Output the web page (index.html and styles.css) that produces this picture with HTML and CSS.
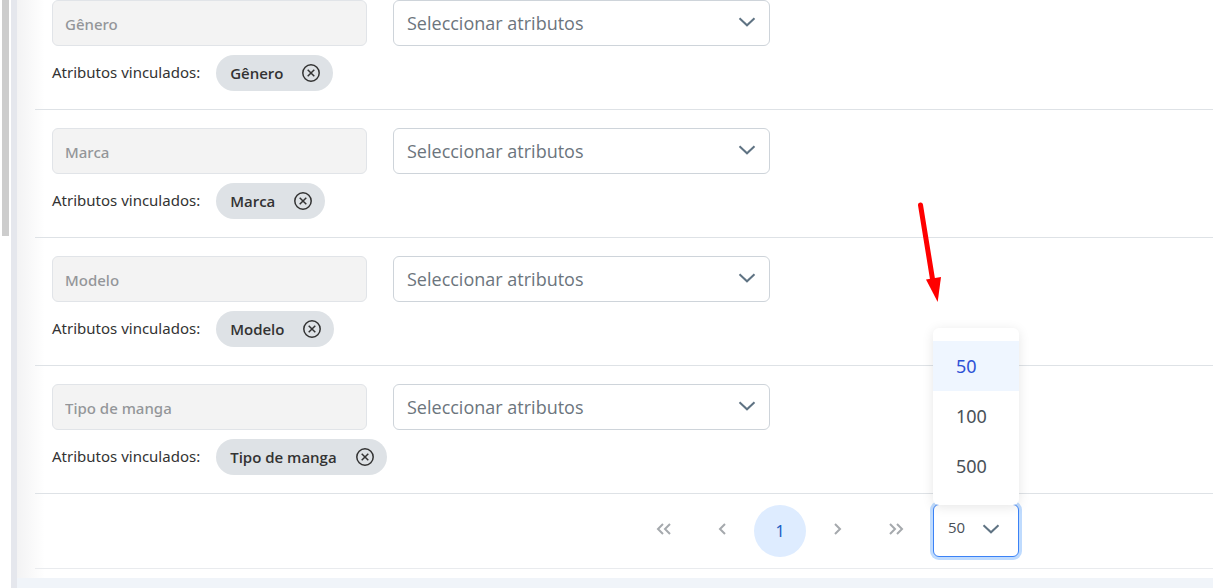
FILE: index.html
```html
<!doctype html>
<html lang="es">
<head>
    <meta charset="UTF-8" />
    <title>Atributos</title>
    <link rel="stylesheet" href="styles.css">
</head>
<body>
<svg class="symbols" aria-hidden="true">
    <symbol id="chevron" viewBox="0 0 18 18"><path d="M1.5 5.3 9 12.3l7.5-7" /></symbol>
    <symbol id="remove" viewBox="0 0 20 20"><circle cx="10" cy="10" r="8.2" /><path d="m6.7 6.7 6.6 6.6m0-6.6-6.6 6.6" /></symbol>
</svg>
<div class="app">
    <div class="scrollbar"><div class="thumb"></div></div>
    <main class="content">
        <div class="rows">
            <div class="row">
                <div class="fields">
                    <input class="name" type="text" value="Gênero" aria-label="Atributo" disabled />
                    <div class="dropdown">
                        <select aria-label="Atributos de Gênero"><option>Seleccionar atributos</option></select>
                        <svg class="chevron"><use href="#chevron" /></svg>
                    </div>
                </div>
                <div class="linked">
                    <span>Atributos vinculados:</span>
                    <div class="chip">Gênero <button type="button" aria-label="Quitar Gênero"><svg><use href="#remove" /></svg></button></div>
                </div>
            </div>
            <div class="row">
                <div class="fields">
                    <input class="name" type="text" value="Marca" aria-label="Atributo" disabled />
                    <div class="dropdown">
                        <select aria-label="Atributos de Marca"><option>Seleccionar atributos</option></select>
                        <svg class="chevron"><use href="#chevron" /></svg>
                    </div>
                </div>
                <div class="linked">
                    <span>Atributos vinculados:</span>
                    <div class="chip">Marca <button type="button" aria-label="Quitar Marca"><svg><use href="#remove" /></svg></button></div>
                </div>
            </div>
            <div class="row">
                <div class="fields">
                    <input class="name" type="text" value="Modelo" aria-label="Atributo" disabled />
                    <div class="dropdown">
                        <select aria-label="Atributos de Modelo"><option>Seleccionar atributos</option></select>
                        <svg class="chevron"><use href="#chevron" /></svg>
                    </div>
                </div>
                <div class="linked">
                    <span>Atributos vinculados:</span>
                    <div class="chip">Modelo <button type="button" aria-label="Quitar Modelo"><svg><use href="#remove" /></svg></button></div>
                </div>
            </div>
            <div class="row">
                <div class="fields">
                    <input class="name" type="text" value="Tipo de manga" aria-label="Atributo" disabled />
                    <div class="dropdown">
                        <select aria-label="Atributos de Tipo de manga"><option>Seleccionar atributos</option></select>
                        <svg class="chevron"><use href="#chevron" /></svg>
                    </div>
                </div>
                <div class="linked">
                    <span>Atributos vinculados:</span>
                    <div class="chip">Tipo de manga <button type="button" aria-label="Quitar Tipo de manga"><svg><use href="#remove" /></svg></button></div>
                </div>
            </div>
        </div>
        <nav class="paginator" aria-label="Paginación">
            <button type="button" aria-label="Primera"><svg viewBox="0 0 16 16"><path d="M7 3 2 8l5 5M14 3 9 8l5 5" /></svg></button>
            <button type="button" aria-label="Anterior"><svg viewBox="0 0 16 16"><path d="m11 3-5 5 5 5" /></svg></button>
            <button type="button" class="current">1</button>
            <button type="button" aria-label="Siguiente"><svg viewBox="0 0 16 16"><path d="m5 3 5 5-5 5" /></svg></button>
            <button type="button" aria-label="Última"><svg viewBox="0 0 16 16"><path d="m2 3 5 5-5 5M9 3l5 5-5 5" /></svg></button>
            <div class="dropdown pagesize">
                <select aria-label="Filas por página"><option>50</option><option>100</option><option>500</option></select>
                <svg class="chevron"><use href="#chevron" /></svg>
                <ul class="menu" role="listbox" aria-label="Filas por página">
                    <li class="selected" role="option" aria-selected="true">50</li>
                    <li role="option" aria-selected="false">100</li>
                    <li role="option" aria-selected="false">500</li>
                </ul>
                <svg class="arrow" viewBox="0 0 26 102" aria-hidden="true">
                    <path class="shaft" d="M5.5 5 17.5 79" />
                    <path class="head" d="m11 79.5 15-2.5-3.3 25z" />
                </svg>
            </div>
        </nav>
    </main>
</div>
</body>
</html>
```

FILE: styles.css
```css
html,body {
    margin: 0;
    padding: 0;
    min-height: 100%;
}
body {
    background: white;
    color: #333;
    font-family: "Noto Sans", sans-serif;
    font-size: 15px;
    line-height: 20px;
}
input,select,button {
    box-sizing: border-box;
    font-family: inherit;
    margin: 0;
}
button {
    background: none;
    border: none;
    cursor: pointer;
    padding: 0;
}
svg {
    fill: none;
    stroke: currentColor;
}
.symbols {
    display: none;
}
.app {
    display: flex;
    min-height: 100vh;
}
.scrollbar {
    border-right: 6px solid #e5e7ed;
    flex: none;
    padding: 0 2px;
    width: 7px;
}
.thumb {
    background: #cdcdcd;
    height: 236px;
}
.content {
    background: linear-gradient(to right, rgba(120, 120, 130, 0.09), rgba(120, 120, 130, 0) 28px);
    border-bottom: 10px solid #f0f4f9;
    flex: 1;
    min-width: 0;
    padding: 0 0 9px 18px;
}
.row {
    border-bottom: 1px solid #dee2e6;
    padding: 18px 17px;
}
.row:first-child {
    padding-top: 0;
}
.fields {
    display: flex;
    gap: 26px;
}
.name {
    background: #f3f3f3;
    border: 1px solid #e1e4e8;
    border-radius: 6px;
    color: #939699;
    flex: 0 1 315px;
    font-size: 15px;
    font-weight: 500;
    height: 46px;
    min-width: 0;
    padding: 1px 12px 0;
}
.dropdown {
    flex: 0 1 377px;
    position: relative;
}
.dropdown select {
    appearance: none;
    background: white;
    border: 1px solid #ced4da;
    border-radius: 6px;
    color: #6c757d;
    font-family: "Open Sans", sans-serif;
    font-size: 18px;
    height: 46px;
    padding: 0 40px 0 13px;
    width: 100%;
}
.chevron {
    color: #5f7383;
    height: 18px;
    pointer-events: none;
    position: absolute;
    right: 14px;
    stroke-width: 2;
    top: 13px;
    width: 18px;
}
.linked {
    align-items: center;
    display: flex;
    gap: 16px;
    margin-top: 9px;
}
.linked span {
    padding-bottom: 3px;
}
.chip {
    align-items: center;
    background: #dee2e6;
    border-radius: 18px;
    display: flex;
    font-family: "Open Sans", sans-serif;
    font-weight: 600;
    gap: 18px;
    height: 36px;
    padding: 0 12px 0 14px;
}
.chip button {
    color: #333;
    height: 20px;
    width: 20px;
}
.chip svg {
    display: block;
    height: 20px;
    stroke-width: 1.5;
    width: 20px;
}
.paginator {
    align-items: center;
    border-bottom: 1px solid #e9ebee;
    display: flex;
    gap: 6px;
    justify-content: flex-end;
    padding: 10px 194px 11px 0;
}
.paginator button {
    border-radius: 50%;
    color: #a5a9ad;
    font-size: 16px;
    height: 52px;
    width: 52px;
}
.paginator button svg {
    height: 16px;
    stroke-width: 2;
    width: 16px;
}
.paginator .current {
    background: #deecff;
    color: #1d5fc4;
}
.pagesize {
    flex: 0 0 86px;
    margin-left: 5px;
}
.pagesize select {
    border-color: #3b82f6;
    box-shadow: 0 0 0 3px #bfdbfe;
    color: #495057;
    display: block;
    font-size: 15px;
    height: 53px;
    padding: 0 30px 8px 14px;
}
.pagesize .chevron {
    right: 19px;
    top: 16px;
}
.menu {
    background: white;
    border-radius: 6px;
    box-shadow: 0 2px 12px rgba(0, 0, 0, 0.1);
    bottom: 52px;
    color: #495057;
    font-size: 18px;
    left: 0;
    line-height: 50px;
    list-style: none;
    margin: 0;
    padding: 13px 0 14px;
    position: absolute;
    right: 0;
}
.menu li {
    padding: 0 23px;
}
.menu .selected {
    background: #eff6ff;
    color: #2d51d6;
}
.arrow {
    bottom: 255px;
    height: 102px;
    left: -18px;
    pointer-events: none;
    position: absolute;
    width: 26px;
}
.shaft {
    stroke: #ff0000;
    stroke-linecap: round;
    stroke-width: 5;
}
.head {
    fill: #ff0000;
    stroke: none;
}
```
